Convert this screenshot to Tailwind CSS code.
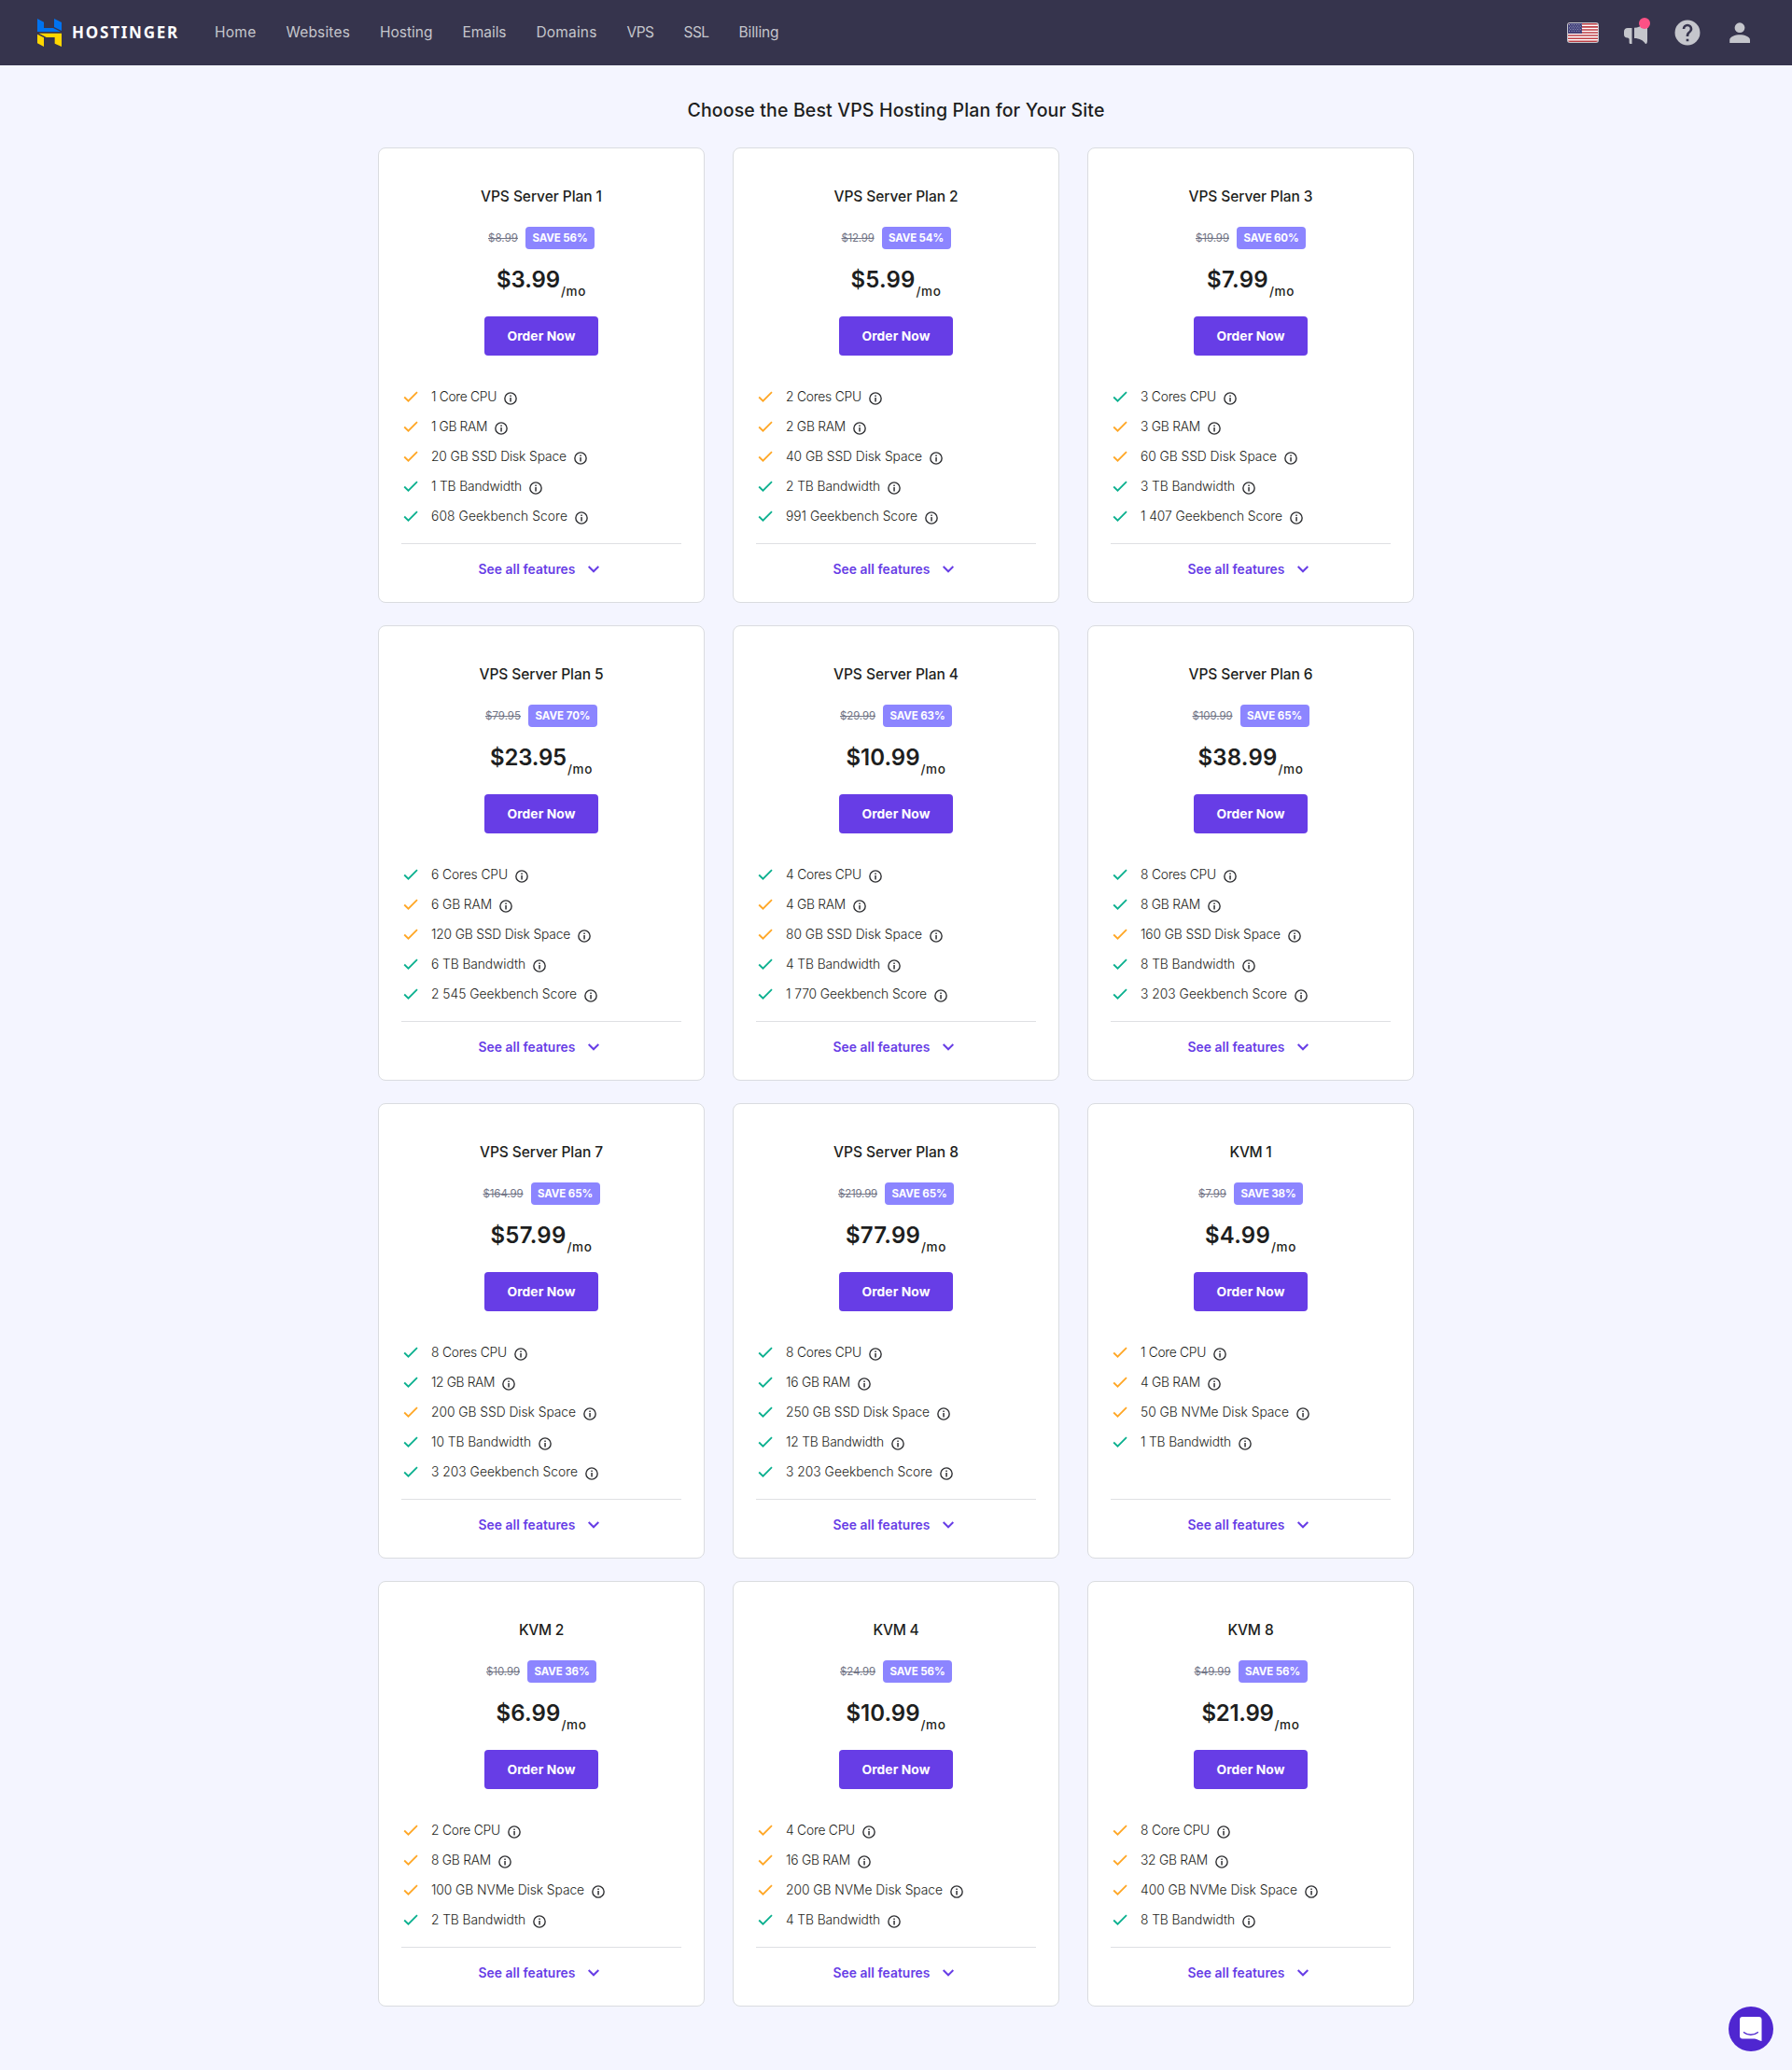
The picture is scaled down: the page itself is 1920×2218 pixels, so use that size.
<!DOCTYPE html>
<html lang="en">
<head>
<meta charset="utf-8">
<title>VPS Hosting Plans</title>
<script src="https://cdn.jsdelivr.net/npm/@tailwindcss/browser@4"></script>
</head>
<body class="bg-[#f4f5ff] font-['Inter',sans-serif] text-[#1d1e20]">
<header class="flex h-[70px] items-center bg-[#36344d] pl-10 pr-10">
  <a class="flex items-center gap-[11px]">
    <svg class="h-[30px] w-[26px]" viewBox="0 0 78 90">
      <path fill="#0073f0" d="M0 0l21 11v19h30l24 12H0zM54 0l24 12v27l-24-12z"/>
      <path fill="#ffd700" d="M5 47h73v43l-22-10V60H29zM0 50l21 11v29L0 79z"/>
    </svg>
    <span data-w="115" data-font="700 17px 'Noto Sans'" class="font-['Noto_Sans'] text-[17px] leading-6 font-bold text-white">HOSTINGER</span>
  </a>
  <nav class="ml-[38px] flex gap-8 text-[15.5px] leading-6 text-[#c5c6cc]">
    <a data-w="44.5" data-font="400 15.5px Inter">Home</a><a data-w="68.5" data-font="400 15.5px Inter">Websites</a><a data-w="56.5" data-font="400 15.5px Inter">Hosting</a><a data-w="47" data-font="400 15.5px Inter">Emails</a><a data-w="65" data-font="400 15.5px Inter">Domains</a><a data-w="29" data-font="400 15.5px Inter">VPS</a><a data-w="27" data-font="400 15.5px Inter">SSL</a><a data-w="43" data-font="400 15.5px Inter">Billing</a>
  </nav>
  <div class="ml-auto flex items-center">
    <svg class="h-[22px] w-[34px]" viewBox="0 0 34 22">
      <clipPath id="flag"><rect x="1" y="1" width="32" height="20" rx="2"/></clipPath>
      <rect width="34" height="22" rx="3" fill="#c5c6cc"/>
      <g clip-path="url(#flag)">
        <rect x="1" y="1" width="32" height="20" fill="#fff"/>
        <path stroke="#bd3d44" stroke-width="1.55" d="M1 1.77h32M1 4.85h32M1 7.92h32M1 11h32M1 14.08h32M1 17.15h32M1 20.23h32"/>
        <rect x="1" y="1" width="15" height="10.8" fill="#3f3f78"/>
        <path stroke="#a9a9c9" stroke-width="1" stroke-dasharray="1 1.6" d="M2 2.5h13.500M3.300 4.200h12.500M2 5.900h13.500M3.300 7.600h12.500M2 9.300h13.500"/>
      </g>
    </svg>
    <svg class="ml-[27px] h-[30px] w-7 -translate-y-px" viewBox="0 0 28 30">
      <path fill="#c5c6cc" d="M4 11h4.500v17H7.300c-1 0-1.700-.6-1.700-1.600v-2.900c0-1.300-.8-2-2-2.100C1.300 21.300 0 20.200 0 18v-3c0-2.600 1.500-4 4-4zM11 10.800c4 0 7.500-2 11-4.300 1.500-.8 3-.4 3 1.500v16c0 2-.4 3.800-1.300 4h-.7c-1.800-3.400-6.500-6-12-6z"/>
      <circle cx="22" cy="6" r="6" fill="#fc5185"/>
    </svg>
    <svg class="ml-6 h-8 w-8" viewBox="0 0 24 24"><path fill="#c5c6cc" d="M12 1.900a10.100 10.100 0 1 0 0 20.200 10.100 10.100 0 0 0 0-20.200zm1 17.100h-2v-2h2v2zm2.070-7.750-.9.920C13.450 12.900 13 13.500 13 15h-2v-.5c0-1.100.450-2.100 1.170-2.830l1.240-1.260c.370-.360.590-.860.590-1.410a2 2 0 1 0-4 0H8a4 4 0 1 1 8 0c0 .880-.360 1.680-.930 2.250z"/></svg>
    <svg class="ml-6 h-8 w-8" viewBox="0 0 32 32"><circle cx="16" cy="10.700" r="5.400" fill="#c5c6cc"/><path fill="#c5c6cc" d="M5.200 27v-3.200c0-3.700 6-5.600 10.900-5.600s10.900 1.900 10.900 5.600V27z"/></svg>
  </div>
</header>

<main class="mx-auto w-[1110px] pt-8">
  <h1 class="flex h-8 items-center justify-center text-[19.5px] leading-8 font-medium"><span data-w="447" data-font="500 19.5px Inter">Choose the Best VPS Hosting Plan for Your Site</span></h1>
  <section id="plans" class="mt-6 grid grid-cols-3 gap-x-[30px] gap-y-6"></section>
</main>

<button class="absolute top-[2150px] left-[1852px] flex size-12 items-center justify-center rounded-full bg-[#4f26d0]" aria-label="Chat">
  <svg class="h-[26px] w-6" viewBox="0 0 24 26"><path fill="#fff" d="M3 0h17.500a3 3 0 0 1 3 3v23c-3 0-4.500-2.500-7.500-2.500H3a3 3 0 0 1-3-3V3a3 3 0 0 1 3-3z"/><path fill="none" stroke="#4f26d0" stroke-width="1.400" stroke-linecap="round" d="M4.500 16.700c4 3.400 10.500 3.400 14.800 0"/></svg>
</button>

<script>
// name, name width, old price, width, discount, price, width, features [label, width, colour: o = orange, g = green]
const plans = [
  ['VPS Server Plan 1',130,'$8.99',32,'56%','$3.99',68,[['1 Core CPU',70,'o'],['1 GB RAM',60,'o'],['20 GB SSD Disk Space',145,'o'],['1 TB Bandwidth',97,'g'],['608 Geekbench Score',146,'g']]],
  ['VPS Server Plan 2',133,'$12.99',35,'54%','$5.99',69,[['2 Cores CPU',81,'o'],['2 GB RAM',64,'o'],['40 GB SSD Disk Space',146,'o'],['2 TB Bandwidth',101,'g'],['991 Geekbench Score',141,'g']]],
  ['VPS Server Plan 3',133,'$19.99',36,'60%','$7.99',66,[['3 Cores CPU',81,'g'],['3 GB RAM',64,'o'],['60 GB SSD Disk Space',146,'o'],['3 TB Bandwidth',101,'g'],['1 407 Geekbench Score',152,'g']]],
  ['VPS Server Plan 5',133,'$79.95',38,'70%','$23.95',82,[['6 Cores CPU',82,'g'],['6 GB RAM',65,'o'],['120 GB SSD Disk Space',149,'o'],['6 TB Bandwidth',101,'g'],['2 545 Geekbench Score',156,'g']]],
  ['VPS Server Plan 4',134,'$29.99',38,'63%','$10.99',79,[['4 Cores CPU',81,'g'],['4 GB RAM',64,'o'],['80 GB SSD Disk Space',146,'o'],['4 TB Bandwidth',101,'g'],['1 770 Geekbench Score',151,'g']]],
  ['VPS Server Plan 6',133,'$109.99',43,'65%','$38.99',85,[['8 Cores CPU',81,'g'],['8 GB RAM',64,'g'],['160 GB SSD Disk Space',150,'o'],['8 TB Bandwidth',101,'g'],['3 203 Geekbench Score',157,'g']]],
  ['VPS Server Plan 7',132,'$164.99',43,'65%','$57.99',81,[['8 Cores CPU',81,'g'],['12 GB RAM',68,'g'],['200 GB SSD Disk Space',155,'o'],['10 TB Bandwidth',107,'g'],['3 203 Geekbench Score',157,'g']]],
  ['VPS Server Plan 8',134,'$219.99',42,'65%','$77.99',80,[['8 Cores CPU',81,'g'],['16 GB RAM',69,'g'],['250 GB SSD Disk Space',154,'g'],['12 TB Bandwidth',105,'g'],['3 203 Geekbench Score',157,'g']]],
  ['KVM 1',45,'$7.99',30,'38%','$4.99',70,[['1 Core CPU',70,'o'],['4 GB RAM',64,'o'],['50 GB NVMe Disk Space',159,'o'],['1 TB Bandwidth',97,'g']]],
  ['KVM 2',48,'$10.99',36,'36%','$6.99',69,[['2 Core CPU',74,'o'],['8 GB RAM',64,'o'],['100 GB NVMe Disk Space',164,'o'],['2 TB Bandwidth',101,'g']]],
  ['KVM 4',49,'$24.99',38,'56%','$10.99',79,[['4 Core CPU',74,'o'],['16 GB RAM',69,'o'],['200 GB NVMe Disk Space',168,'o'],['4 TB Bandwidth',101,'g']]],
  ['KVM 8',49,'$49.99',39,'56%','$21.99',77,[['8 Core CPU',74,'o'],['32 GB RAM',72,'o'],['400 GB NVMe Disk Space',168,'o'],['8 TB Bandwidth',101,'g']]],
];
const feature = ([label, w, tone]) => `
  <li class="flex h-8 items-center">
    <svg class="mr-[14px] h-4 w-[18px]" viewBox="0 0 18 16"><path fill="none" stroke="${tone === 'o' ? '#ffa726' : '#0bb08f'}" stroke-width="1.800" d="M3.200 8.500l4.300 4.200L17 3.200"/></svg>
    <span data-w="${w}" data-font="300 13.8px Inter" class="text-[13.8px] leading-5 font-light">${label}</span>
    <svg class="mt-[3px] ml-2 size-[14px]" viewBox="0 0 14 14"><circle cx="7" cy="7" r="6.150" fill="none" stroke="#2f3033" stroke-width="1.400"/><path fill="#2f3033" d="M6.300 3.500h1.500v1.400H6.300zM6.300 6.100h1.500v4.400H6.300z"/></svg>
  </li>`;
document.getElementById('plans').innerHTML = plans.map(([name, nw, old, ow, save, price, pw, items], i) => `
  <article class="flex flex-col items-center rounded-lg border border-[#dadce0] bg-white px-6 ${i < 9 ? 'h-[488px]' : 'h-[456px]'}">
    <h2 class="mt-10 text-[15.5px] leading-6 font-medium"><span data-w="${nw}" data-font="500 15.5px Inter">${name}</span></h2>
    <div class="mt-5 flex h-6 items-center gap-2">
      <s data-w="${ow}" data-font="400 11.5px Inter" class="text-[11.5px] leading-4 text-[#727586]">${old}</s>
      <span class="flex h-6 w-[74px] items-center justify-center rounded bg-[#8c85ff]"><b data-w="59" data-font="700 11.5px Inter" class="text-[11.5px] leading-4 font-bold text-white">SAVE ${save}</b></span>
    </div>
    <div class="mt-[13px] flex h-10 items-center">
      <span data-w="${pw}" data-font="600 24px Inter" class="text-[24px] leading-8 font-semibold">${price}</span>
      <span data-w="27" data-font="500 13.5px Inter" class="mt-[23px] ml-px text-[13.5px] leading-5 font-medium">/mo</span>
    </div>
    <button class="mt-[19px] flex h-[42px] w-[122px] shrink-0 items-center justify-center rounded bg-[#673de6] text-[13.8px] leading-6 font-bold text-white"><span data-w="73" data-font="700 13.8px Inter">Order Now</span></button>
    <ul class="mt-7 w-full grow border-b border-[#dfe0e3] pb-3">${items.map(feature).join('')}</ul>
    <a class="flex h-[62px] shrink-0 items-center gap-3 pr-[5px] pb-2 text-[13.8px] leading-5 font-semibold text-[#673de6]"><span data-w="104" data-font="600 13.8px Inter">See all features</span><svg class="h-3 w-[14px]" viewBox="0 0 14 12"><path fill="none" stroke="currentColor" stroke-width="2" d="M1.700 3L7 8.300 12.300 3"/></svg></a>
  </article>`).join('');
// Tracks each label so that its letters fill the width given for it
const ctx = document.createElement('canvas').getContext('2d');
document.querySelectorAll('[data-w]').forEach(el => {
  ctx.font = el.dataset.font;
  const w = +el.dataset.w;
  el.style.display = 'inline-block';
  el.style.whiteSpace = 'nowrap';
  el.style.letterSpacing = (w - ctx.measureText(el.textContent).width) / el.textContent.length + 'px';
  el.style.width = w + 'px';
});
</script>
</body>
</html>
